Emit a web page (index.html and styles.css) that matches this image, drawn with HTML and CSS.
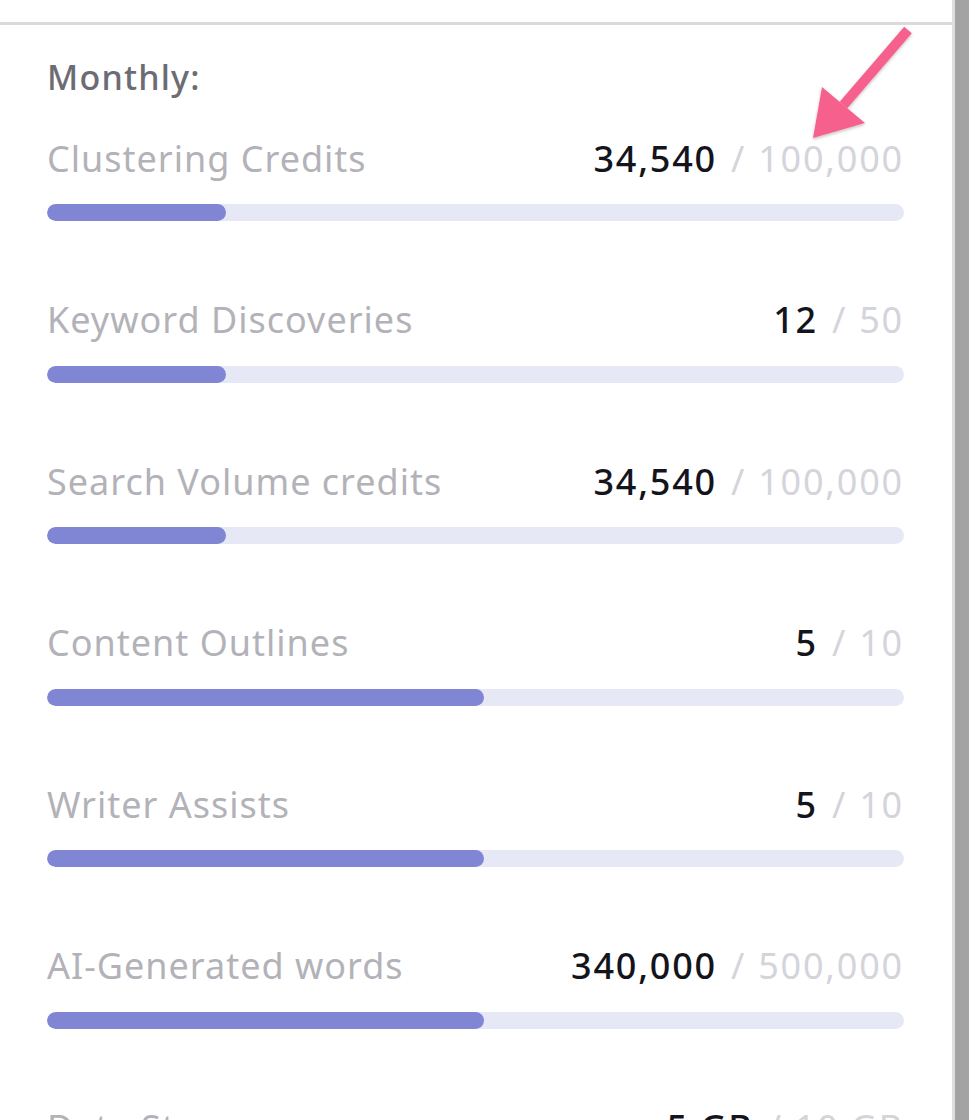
FILE: index.html
```html
<!DOCTYPE html>
<html lang="en">

<head>
  <meta charset="UTF-8" />
  <title>Usage</title>
  <meta name="viewport" content="width=device-width, initial-scale=1.0" />
  <link rel="stylesheet" href="styles.css">
</head>

<body>

  <div class="panel">
    <div class="panel-top"></div>

    <div class="usage">
      <h3 class="period">Monthly:</h3>

      <div class="usage-row">
        <div class="usage-head">
          <span class="usage-name">Clustering Credits</span>
          <span class="usage-count"><b>34,540</b><i>/</i>100,000</span>
        </div>
        <div class="bar"><div class="bar-fill" style="width: 20.9%"></div></div>
      </div>

      <div class="usage-row">
        <div class="usage-head">
          <span class="usage-name">Keyword Discoveries</span>
          <span class="usage-count"><b>12</b><i>/</i>50</span>
        </div>
        <div class="bar"><div class="bar-fill" style="width: 20.9%"></div></div>
      </div>

      <div class="usage-row">
        <div class="usage-head">
          <span class="usage-name">Search Volume credits</span>
          <span class="usage-count"><b>34,540</b><i>/</i>100,000</span>
        </div>
        <div class="bar"><div class="bar-fill" style="width: 20.9%"></div></div>
      </div>

      <div class="usage-row">
        <div class="usage-head">
          <span class="usage-name">Content Outlines</span>
          <span class="usage-count"><b>5</b><i>/</i>10</span>
        </div>
        <div class="bar"><div class="bar-fill" style="width: 51%"></div></div>
      </div>

      <div class="usage-row">
        <div class="usage-head">
          <span class="usage-name">Writer Assists</span>
          <span class="usage-count"><b>5</b><i>/</i>10</span>
        </div>
        <div class="bar"><div class="bar-fill" style="width: 51%"></div></div>
      </div>

      <div class="usage-row">
        <div class="usage-head">
          <span class="usage-name">AI-Generated words</span>
          <span class="usage-count"><b>340,000</b><i>/</i>500,000</span>
        </div>
        <div class="bar"><div class="bar-fill" style="width: 51%"></div></div>
      </div>

      <div class="usage-row">
        <div class="usage-head">
          <span class="usage-name">Data Storage</span>
          <span class="usage-count"><b>5 GB</b><i>/</i>10 GB</span>
        </div>
        <div class="bar"><div class="bar-fill" style="width: 50%"></div></div>
      </div>
    </div>

    <!-- pointer arrow -->
    <svg class="pointer" width="120" height="130" viewBox="0 0 120 130">
      <defs>
        <filter id="drop" x="-20%" y="-20%" width="140%" height="140%">
          <feDropShadow dx="0" dy="1.5" stdDeviation="1.5" flood-color="#000" flood-opacity="0.25" />
        </filter>
      </defs>
      <g filter="url(#drop)" fill="#f6608c">
        <path d="M106.8 7.3 L99.2 0.7 L34.7 75.7 L42.3 82.3 Z" />
        <path d="M8 112 L17 61 L60 97 Z" />
      </g>
    </svg>
  </div>

</body>

</html>
```

FILE: styles.css
```css
* {
  margin: 0;
  padding: 0;
  box-sizing: border-box;
}

html, body {
  height: 100%;
  overflow: hidden;
}

body {
  background: #a3a3a3;
  font-family: 'Noto Sans', 'Open Sans', sans-serif;
}

.panel {
  position: relative;
  width: 955px;
  min-height: 100%;
  background: #fff;
  border-right: 3px solid #dedede;
}

.panel-top {
  height: 25px;
  border-bottom: 3px solid #dadada;
}

.usage {
  padding: 30px 48px 0 47px;
}

.period {
  font-size: 34px;
  font-weight: 500;
  letter-spacing: 1.2px;
  line-height: 44px;
  color: #6c6c74;
  margin-bottom: 37px;
}

.usage-row {
  margin-bottom: 76.5px;
}

.usage-head {
  display: flex;
  justify-content: space-between;
  align-items: center;
  height: 44px;
  margin-bottom: 24px;
  font-size: 36px;
  letter-spacing: 1px;
}

.usage-name {
  color: #b2b2b8;
}

.usage-count {
  color: #d4d4da;
  letter-spacing: 1.8px;
}

.usage-count b {
  color: #14141c;
  font-weight: 500;
}

.usage-count i {
  font-style: normal;
  margin: 0 12px 0 14px;
}

.bar {
  height: 17px;
  border-radius: 9px;
  background: #e7e8f6;
  overflow: hidden;
}

.bar-fill {
  height: 100%;
  border-radius: 9px;
  background: #8086d4;
}

.pointer {
  position: absolute;
  top: 26px;
  left: 805px;
}
```
